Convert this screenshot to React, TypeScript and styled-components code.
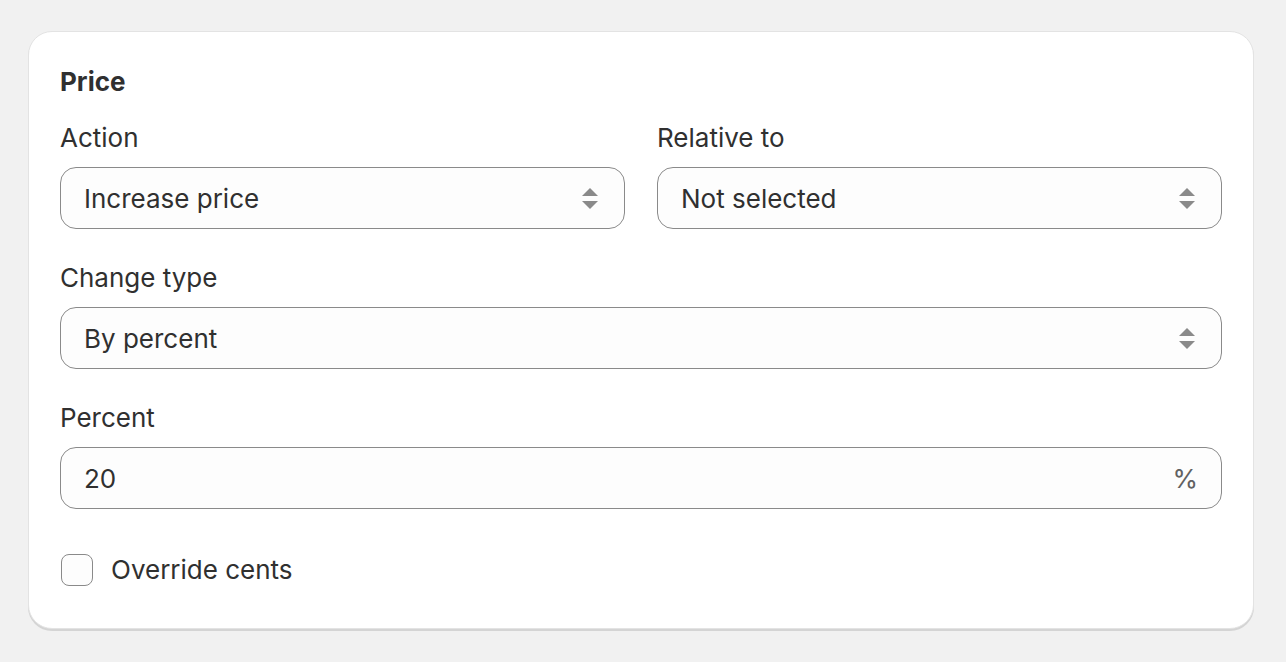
import React from 'react';
import styled, { createGlobalStyle } from 'styled-components';

const GlobalStyle = createGlobalStyle`
  html, body {
    margin: 0;
    padding: 0;
    background: #f1f1f1;
  }
  body {
    font-family: Inter, "Noto Sans", sans-serif;
    color: #303030;
  }
`;

const Page = styled.div`
  padding: 31px 32px 32px 28px;
`;

const Card = styled.section`
  background: #ffffff;
  border-radius: 24px;
  border: 1px solid #e3e3e3;
  box-shadow: 0 2px 0 #d4d4d4;
  padding: 30px 31px 38px 31px;
  display: flex;
  flex-direction: column;
  gap: 29px;
`;

const Title = styled.h2`
  margin: 0 0 -13px;
  font-size: 26px;
  font-weight: 650;
  line-height: 40px;
`;

const Row = styled.div`
  display: grid;
  grid-template-columns: 1fr 1fr;
  gap: 32px;
`;

const Field = styled.div`
  display: flex;
  flex-direction: column;
  gap: 9px;
`;

const Label = styled.label`
  font-size: 26px;
  line-height: 40px;
  font-weight: 400;
`;

const Box = styled.div`
  height: 62px;
  box-sizing: border-box;
  border: 1px solid #8a8a8a;
  border-radius: 16px;
  background: #fdfdfd;
  display: flex;
  align-items: center;
  justify-content: space-between;
  padding: 0 24px 0 23px;
  font-size: 26px;
`;

const Value = styled.span`
  color: #303030;
`;

const Suffix = styled.span`
  color: #616161;
  margin-right: -1px;
`;

const Arrows = styled.span`
  display: flex;
  flex-direction: column;
  gap: 5px;
  margin-right: 2px;
`;

const Tri = styled.span<{ $down?: boolean }>`
  width: 0;
  height: 0;
  border-left: 8px solid transparent;
  border-right: 8px solid transparent;
  ${({ $down }) =>
    $down ? 'border-top: 8px solid #8a8a8a;' : 'border-bottom: 8px solid #8a8a8a;'}
`;

const CheckRow = styled.label`
  display: flex;
  align-items: center;
  gap: 18px;
  margin-top: 12px;
  margin-left: 1px;
  font-size: 26px;
  line-height: 40px;
`;

const CheckBox = styled.span`
  width: 32px;
  height: 32px;
  box-sizing: border-box;
  border: 1px solid #8a8a8a;
  border-radius: 8px;
  background: #fdfdfd;
`;

const Select = ({ value }: { value: string }) => (
  <Box>
    <Value>{value}</Value>
    <Arrows>
      <Tri />
      <Tri $down />
    </Arrows>
  </Box>
);

export default function App() {
  return (
    <>
      <GlobalStyle />
      <Page>
        <Card>
          <Title>Price</Title>
          <Row>
            <Field>
              <Label>Action</Label>
              <Select value="Increase price" />
            </Field>
            <Field>
              <Label>Relative to</Label>
              <Select value="Not selected" />
            </Field>
          </Row>
          <Field>
            <Label>Change type</Label>
            <Select value="By percent" />
          </Field>
          <Field>
            <Label>Percent</Label>
            <Box>
              <Value>20</Value>
              <Suffix>%</Suffix>
            </Box>
          </Field>
          <CheckRow>
            <CheckBox />
            Override cents
          </CheckRow>
        </Card>
      </Page>
    </>
  );
}
